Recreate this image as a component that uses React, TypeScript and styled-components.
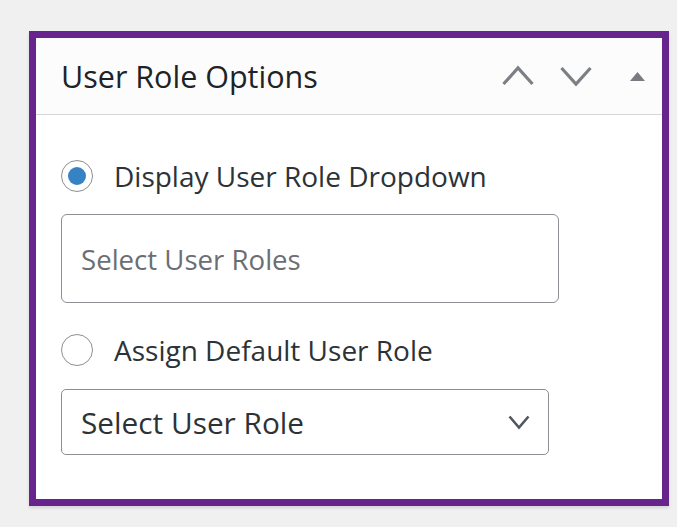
import React from "react";
import styled, { createGlobalStyle } from "styled-components";

const Global = createGlobalStyle`
  html, body { margin: 0; padding: 0; background: #f0f0f1; }
  body { font-family: "Open Sans", "Noto Sans", sans-serif; }
  * { box-sizing: border-box; }
`;

const Page = styled.div`
  padding: 31px 0 0 29px;
  width: 677px;
  height: 527px;
`;

const Panel = styled.div`
  width: 640px;
  height: 475px;
  border: 7px solid #66248c;
  background: #fff;
  box-shadow: 0 2px 3px rgba(0, 0, 0, 0.12);
  display: flex;
  flex-direction: column;
`;

const Header = styled.div`
  height: 77px;
  flex: none;
  display: flex;
  align-items: center;
  padding: 0 17px 0 25px;
  background: #fcfcfc;
  border-bottom: 1px solid #d6d6d8;
`;

const Title = styled.h2`
  margin: 0;
  flex: 1;
  font-size: 30.5px;
  font-weight: 400;
  color: #1d2327;
  letter-spacing: 0;
`;

const Actions = styled.div`
  display: flex;
  align-items: center;
`;

const IconButton = styled.span<{ $ml: number; $w: number }>`
  display: inline-flex;
  align-items: center;
  justify-content: center;
  margin-left: ${(p) => p.$ml}px;
  width: ${(p) => p.$w}px;
  height: 32px;
  color: #7c8086;
`;

const Body = styled.div`
  padding: 45px 25px 0 25px;
  display: flex;
  flex-direction: column;
`;

const RadioRow = styled.label<{ $gap: number }>`
  display: flex;
  align-items: center;
  height: 32px;
  margin-top: ${(p) => p.$gap}px;
  gap: 21px;
  font-size: 28px;
  color: #2c3338;
`;

const RadioCircle = styled.span<{ $checked?: boolean }>`
  width: 32px;
  height: 32px;
  border-radius: 50%;
  border: 1.5px solid #8c8f94;
  background: #fff;
  display: inline-flex;
  align-items: center;
  justify-content: center;
  flex: none;
  &::after {
    content: "";
    display: ${(p) => (p.$checked ? "block" : "none")};
    width: 18px;
    height: 18px;
    border-radius: 50%;
    background: #3582c4;
  }
`;

const TextBox = styled.div`
  margin-top: 22px;
  width: 498px;
  height: 89px;
  border: 1.5px solid #8c8f94;
  border-radius: 6px;
  display: flex;
  align-items: center;
  padding-left: 19px;
  font-size: 27.6px;
  color: #6b6e73;
`;

const Select = styled.div`
  margin-top: 23px;
  width: 488px;
  height: 66px;
  border: 1.5px solid #8c8f94;
  border-radius: 5px;
  display: flex;
  align-items: center;
  justify-content: space-between;
  padding: 0 18px 0 19px;
  font-size: 29.8px;
  color: #2c3338;
`;

const SelectArrow = styled.span`
  display: inline-flex;
  color: #50575e;
`;

const Chevron = ({
  dir,
  w = 32,
  h = 32,
  stroke = 3.2,
}: {
  dir: "up" | "down";
  w?: number;
  h?: number;
  stroke?: number;
}) => (
  <svg width={w} height={h} viewBox={`0 0 ${w} ${h}`} fill="none">
    <path
      d={
        dir === "up"
          ? `M1.5 ${h / 2 + w / 4} L${w / 2} ${h / 2 - w / 4} L${w - 1.5} ${h / 2 + w / 4}`
          : `M1.5 ${h / 2 - w / 4} L${w / 2} ${h / 2 + w / 4} L${w - 1.5} ${h / 2 - w / 4}`
      }
      stroke="currentColor"
      strokeWidth={stroke}
    />
  </svg>
);

export default function App() {
  return (
    <>
      <Global />
      <Page>
        <Panel>
          <Header>
            <Title>User Role Options</Title>
            <Actions>
              <IconButton $ml={0} $w={32}>
                <Chevron dir="up" />
              </IconButton>
              <IconButton $ml={26} $w={32}>
                <Chevron dir="down" />
              </IconButton>
              <IconButton $ml={38} $w={15}>
                <svg width="15" height="9" viewBox="0 0 15 9">
                  <path d="M7.5 0 L15 9 L0 9 Z" fill="#787c82" />
                </svg>
              </IconButton>
            </Actions>
          </Header>
          <Body>
            <RadioRow $gap={0}>
              <RadioCircle $checked />
              Display User Role Dropdown
            </RadioRow>
            <TextBox>Select User Roles</TextBox>
            <RadioRow $gap={31}>
              <RadioCircle />
              Assign Default User Role
            </RadioRow>
            <Select>
              Select User Role
              <SelectArrow>
                <Chevron dir="down" w={22} h={22} stroke={2.6} />
              </SelectArrow>
            </Select>
          </Body>
        </Panel>
      </Page>
    </>
  );
}
